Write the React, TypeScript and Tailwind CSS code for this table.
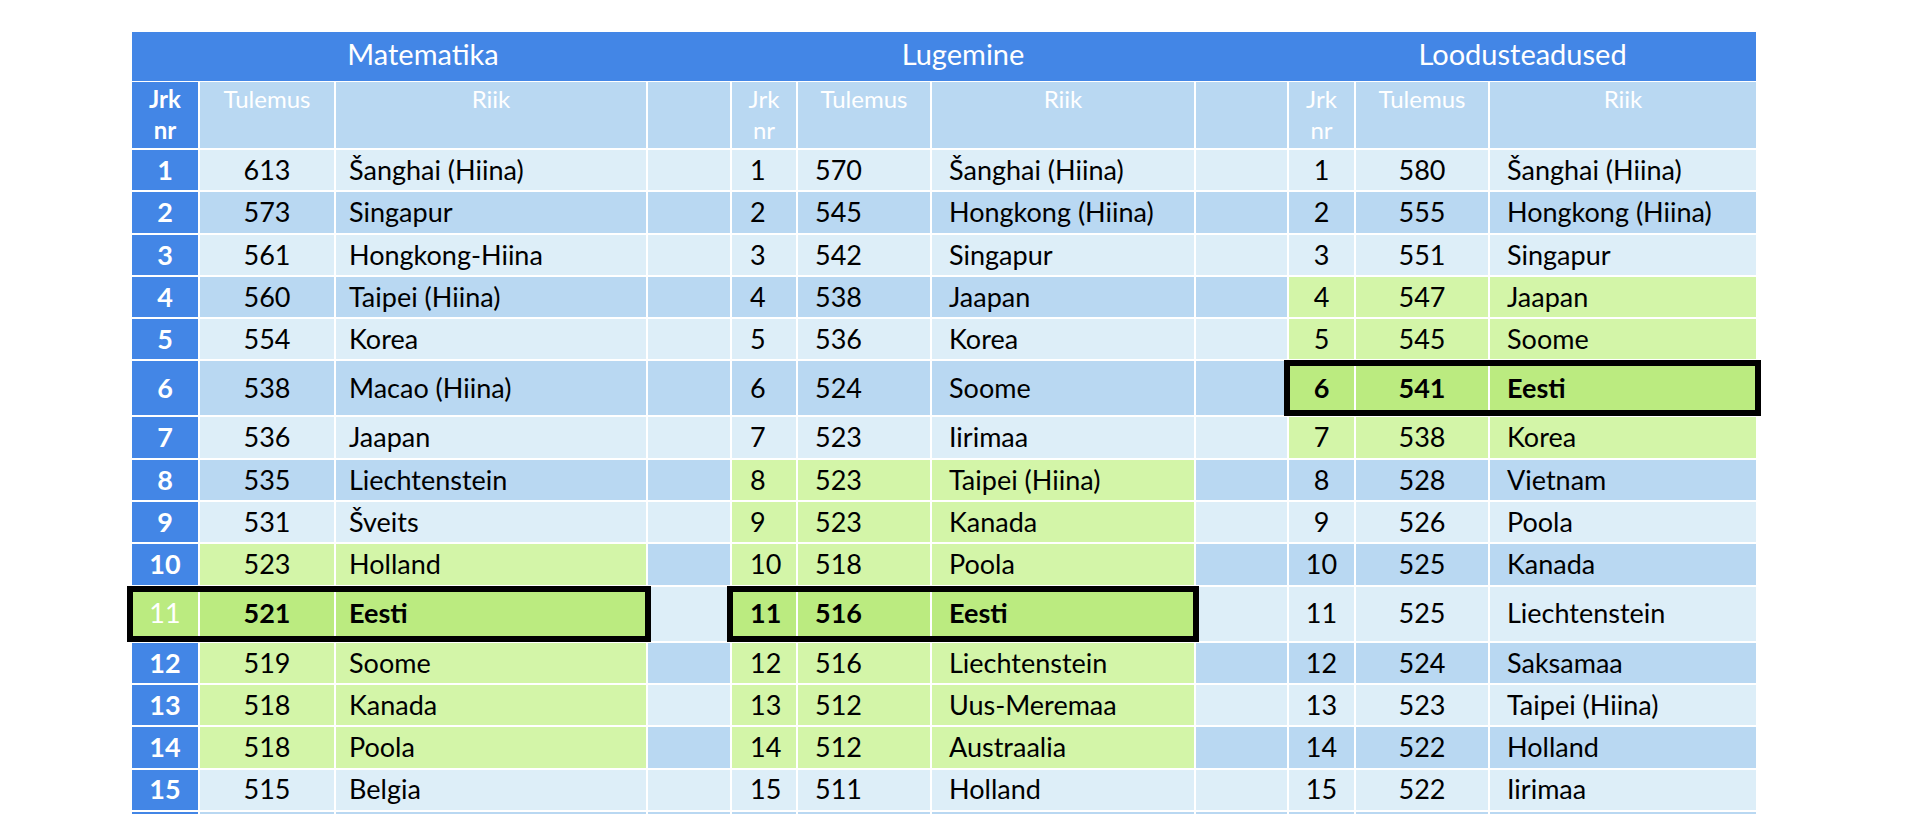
type Row = [number, number, string]

const MATH: Row[] = [
  [1, 613, 'Šanghai (Hiina)'],
  [2, 573, 'Singapur'],
  [3, 561, 'Hongkong-Hiina'],
  [4, 560, 'Taipei (Hiina)'],
  [5, 554, 'Korea'],
  [6, 538, 'Macao (Hiina)'],
  [7, 536, 'Jaapan'],
  [8, 535, 'Liechtenstein'],
  [9, 531, 'Šveits'],
  [10, 523, 'Holland'],
  [11, 521, 'Eesti'],
  [12, 519, 'Soome'],
  [13, 518, 'Kanada'],
  [14, 518, 'Poola'],
  [15, 515, 'Belgia'],
  [16, 514, 'Saksamaa'],
]

const READ: Row[] = [
  [1, 570, 'Šanghai (Hiina)'],
  [2, 545, 'Hongkong (Hiina)'],
  [3, 542, 'Singapur'],
  [4, 538, 'Jaapan'],
  [5, 536, 'Korea'],
  [6, 524, 'Soome'],
  [7, 523, 'Iirimaa'],
  [8, 523, 'Taipei (Hiina)'],
  [9, 523, 'Kanada'],
  [10, 518, 'Poola'],
  [11, 516, 'Eesti'],
  [12, 516, 'Liechtenstein'],
  [13, 512, 'Uus-Meremaa'],
  [14, 512, 'Austraalia'],
  [15, 511, 'Holland'],
  [16, 509, 'Belgia'],
]

const SCI: Row[] = [
  [1, 580, 'Šanghai (Hiina)'],
  [2, 555, 'Hongkong (Hiina)'],
  [3, 551, 'Singapur'],
  [4, 547, 'Jaapan'],
  [5, 545, 'Soome'],
  [6, 541, 'Eesti'],
  [7, 538, 'Korea'],
  [8, 528, 'Vietnam'],
  [9, 526, 'Poola'],
  [10, 525, 'Kanada'],
  [11, 525, 'Liechtenstein'],
  [12, 524, 'Saksamaa'],
  [13, 523, 'Taipei (Hiina)'],
  [14, 522, 'Holland'],
  [15, 522, 'Iirimaa'],
  [16, 521, 'Austraalia'],
]

const LIGHT = 'bg-[#ddeef8]'
const MEDIUM = 'bg-[#b9d8f2]'
const GREEN = 'bg-[#d3f5a8]'
const BRIGHT = 'bg-[#bbeb80]'
const BLUE = 'bg-[#4386e6]'

// rows 6 and 11 are the tall ones in the original slide
const TALL = [6, 11]

interface Section {
  rows: Row[]
  green: number[]
  eesti: number
  blueJrk: boolean
  widths: [string, string, string]
  tulCls: string
  jrkCls: string
  riikCls: string
}

const SECTIONS: Section[] = [
  {
    rows: MATH,
    green: [10, 12, 13, 14],
    eesti: 11,
    blueJrk: true,
    widths: ['w-[66px]', 'w-[134px]', 'w-[310px]'],
    jrkCls: 'justify-center',
    tulCls: 'justify-center',
    riikCls: 'pl-[13px]',
  },
  {
    rows: READ,
    green: [8, 9, 10, 12, 13, 14],
    eesti: 11,
    blueJrk: false,
    widths: ['w-[64px]', 'w-[132px]', 'w-[262px]'],
    jrkCls: 'pl-[18px]',
    tulCls: 'pl-[17px]',
    riikCls: 'pl-[17px]',
  },
  {
    rows: SCI,
    green: [4, 5, 7],
    eesti: 6,
    blueJrk: false,
    widths: ['w-[65px]', 'w-[132px]', 'w-[266px]'],
    jrkCls: 'justify-center',
    tulCls: 'justify-center',
    riikCls: 'pl-[17px]',
  },
]

function SectionCells({ s, i }: { s: Section; i: number }) {
  const [nr, score, name] = s.rows[i]
  const stripe = nr % 2 === 1 ? LIGHT : MEDIUM
  const isEesti = nr === s.eesti
  const bg = isEesti ? BRIGHT : s.green.includes(nr) ? GREEN : stripe
  const jrkBg = s.blueJrk && !isEesti ? BLUE : bg
  const jrkText = s.blueJrk ? (isEesti ? 'text-white' : 'text-white font-bold') : isEesti ? 'font-bold' : ''
  const weight = isEesti ? 'font-bold' : ''
  return (
    <div className="relative flex gap-[2px]">
      <div className={`${s.widths[0]} ${jrkBg} ${jrkText} ${s.jrkCls} flex items-center`}>{nr}</div>
      <div className={`${s.widths[1]} ${bg} ${weight} ${s.tulCls} flex items-center`}>{score}</div>
      <div className={`${s.widths[2]} ${bg} ${weight} ${s.riikCls} flex items-center`}>{name}</div>
      {isEesti && (
        <div className="absolute -left-[5px] -right-[5px] -top-[1px] -bottom-[1px] border-[6px] border-black pointer-events-none" />
      )}
    </div>
  )
}

function SubHeader({ widths, bold }: { widths: [string, string, string]; bold: boolean }) {
  return (
    <div className="flex gap-[2px]">
      <div
        className={`${widths[0]} ${bold ? `${BLUE} font-bold` : MEDIUM} flex flex-col items-center pt-[1px] leading-[31px]`}
      >
        <span>Jrk</span>
        <span>nr</span>
      </div>
      <div className={`${widths[1]} ${MEDIUM} flex justify-center pt-[1px] leading-[31px]`}>Tulemus</div>
      <div className={`${widths[2]} ${MEDIUM} flex justify-center pt-[1px] leading-[31px]`}>Riik</div>
    </div>
  )
}

export default function App() {
  return (
    <div
      className="min-h-screen bg-white pt-[32px] pl-[132px] text-black"
      style={{ fontFamily: 'Lato, "Open Sans", sans-serif' }}
    >
      <div className="w-[1624px]">
        {/* title bar */}
        <div className={`flex h-[49px] ${BLUE} text-white text-[29px] leading-none`}>
          <div className="w-[598px] pr-[16px] flex justify-center pt-[7px]">Matematika</div>
          <div className="w-[462px] ml-[2px] flex justify-center pt-[7px]">Lugemine</div>
          <div className="w-[93px]" />
          <div className="w-[467px] ml-[2px] flex justify-center pt-[7px]">Loodusteadused</div>
        </div>

        {/* column headers */}
        <div className="flex gap-[2px] mt-[1px] h-[66px] text-white text-[24px]">
          <SubHeader widths={SECTIONS[0].widths} bold />
          <div className={`w-[82px] ${MEDIUM}`} />
          <SubHeader widths={SECTIONS[1].widths} bold={false} />
          <div className={`w-[91px] ${MEDIUM}`} />
          <SubHeader widths={SECTIONS[2].widths} bold={false} />
        </div>

        {/* data rows */}
        <div className="flex flex-col gap-[2px] mt-[2px] text-[27px]">
          {MATH.map((r, i) => {
            const nr = r[0]
            const stripe = nr % 2 === 1 ? LIGHT : MEDIUM
            const h = TALL.includes(nr) ? 'h-[54px]' : 'h-[40.3px]'
            return (
              <div key={nr} className={`flex gap-[2px] ${h}`}>
                <SectionCells s={SECTIONS[0]} i={i} />
                <div className={`w-[82px] ${stripe}`} />
                <SectionCells s={SECTIONS[1]} i={i} />
                <div className={`w-[91px] ${stripe}`} />
                <SectionCells s={SECTIONS[2]} i={i} />
              </div>
            )
          })}
        </div>
      </div>
    </div>
  )
}
